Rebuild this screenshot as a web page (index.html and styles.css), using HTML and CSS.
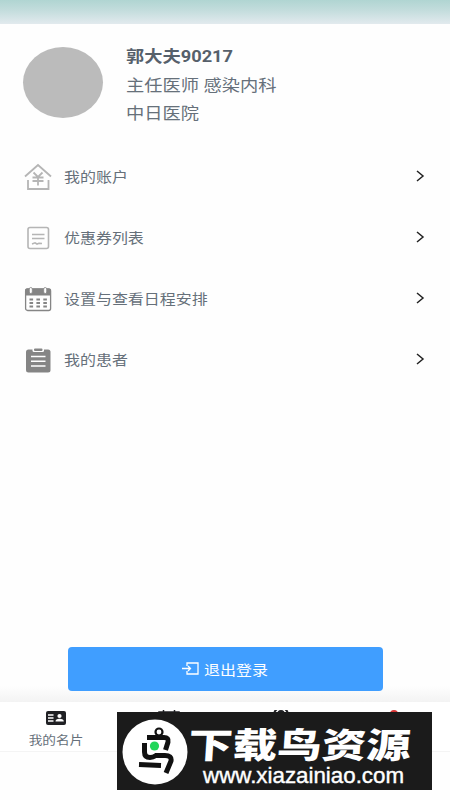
FILE: index.html
```html
<!DOCTYPE html>
<html lang="zh-CN">
<head>
    <meta charset="UTF-8">
    <meta name="viewport" content="width=device-width, initial-scale=1.0">
    <title>我的名片</title>
    <link rel="stylesheet" href="styles.css">
</head>
<body>
    <div class="page">
        <div class="topbar"></div>

        <div class="profile">
            <div class="avatar"></div>
            <div class="info">
                <div class="name"><span class="wide">郭大夫90217</span></div>
                <div><span class="wide">主任医师 感染内科</span></div>
                <div><span class="wide">中日医院</span></div>
            </div>
        </div>

        <div class="menu">
            <div class="item">
                <svg class="icon" viewBox="0 0 28 28" fill="none" stroke="#b5b5b5" stroke-width="1.8">
                    <path d="M1 13.500L14 2L27 13.500M4 17V26H24.500V17M9.500 9.500L14 14L18.500 9.500M8.500 14.500H19.500M8.500 18H19.500M14 14V22.500"/>
                </svg>
                <span class="wide">我的账户</span>
                <svg class="arrow" viewBox="0 0 10 12"><path d="M2 1L8 6L2 11"/></svg>
            </div>
            <div class="item">
                <svg class="icon" viewBox="0 0 28 28" fill="none" stroke="#b5b5b5" stroke-width="1.6">
                    <rect x="4" y="3.500" width="20.500" height="21" rx="2"/>
                    <path d="M8 10.500H20.500M8 14.500H20.500M8 20L11 18.800L13 20L15 19.200L18 19.500"/>
                </svg>
                <span class="wide">优惠券列表</span>
                <svg class="arrow" viewBox="0 0 10 12"><path d="M2 1L8 6L2 11"/></svg>
            </div>
            <div class="item">
                <svg class="icon" viewBox="0 0 28 28">
                    <rect x="1.600" y="4" width="25" height="21.500" rx="2" fill="#fff" stroke="#858585" stroke-width="1.300"/>
                    <path d="M1 10.500V5.500Q1 3.500 3 3.500H25Q27 3.500 27 5.500V10.500Z" fill="#858585"/>
                    <rect x="5.300" y="2.500" width="3" height="6" rx="1.500" fill="#fff" stroke="#858585" stroke-width=".8"/>
                    <rect x="19.700" y="2.500" width="3" height="6" rx="1.500" fill="#fff" stroke="#858585" stroke-width=".8"/>
                    <path d="M5.500 14.500H23M5.500 18H23M5.500 21.500H23" fill="none" stroke="#858585" stroke-width="1.900" stroke-dasharray="3.600 3.300"/>
                </svg>
                <span class="wide">设置与查看日程安排</span>
                <svg class="arrow" viewBox="0 0 10 12"><path d="M2 1L8 6L2 11"/></svg>
            </div>
            <div class="item">
                <svg class="icon" viewBox="0 0 28 28">
                    <rect x="2" y="3.500" width="24.500" height="23" rx="2.500" fill="#858585"/>
                    <rect x="8.500" y="2" width="11.500" height="4" rx="1.500" fill="#fff"/>
                    <rect x="10" y="2.500" width="8.500" height="2.500" rx="1" fill="#858585"/>
                    <path d="M7 10.500H21.500M7 15.200H21.500M7 20H21.500" stroke="#fff" stroke-width="1.500"/>
                </svg>
                <span class="wide">我的患者</span>
                <svg class="arrow" viewBox="0 0 10 12"><path d="M2 1L8 6L2 11"/></svg>
            </div>
        </div>

        <div class="logout-area">
            <button class="logout">
                <svg class="exit" viewBox="0 0 17 13" fill="none" stroke="#fff" stroke-width="1.300">
                    <path d="M5 4V1H16V12H5V9M0 6.500H8M6 4L8.500 6.500L6 9"/>
                </svg>
                <span class="wide">退出登录</span>
            </button>
        </div>

        <div class="tabs">
            <div class="tab">
                <svg class="card" viewBox="0 0 20 14">
                    <rect width="20" height="14" rx="2" fill="#202124"/>
                    <path d="M2 4H7.500M2 7H7.500M2 10H7.500" stroke="#fff" stroke-width="1.300"/>
                    <circle cx="13.500" cy="5" r="2.100" fill="#fff"/>
                    <path d="M9.500 10.500Q9.500 7.700 13.500 7.700Q17.800 7.700 17.800 10.500Z" fill="#fff"/>
                </svg>
                <span class="wide">我的名片</span>
            </div>
            <div class="tab">
                <svg class="peek" viewBox="0 0 22 14" fill="none" stroke="#202124" stroke-width="1.500">
                    <path d="M1 4V2H21V4M5.500 0V2M16.500 0V2"/>
                </svg>
            </div>
            <div class="tab">
                <svg class="peek" viewBox="0 0 22 14" fill="none" stroke="#202124" stroke-width="2">
                    <path d="M7 -1Q4 1 4 5M15 -1Q18 1 18 5M8 5Q8 1 11 1T14 5"/>
                </svg>
            </div>
            <div class="tab">
                <span class="dot"></span>
            </div>
        </div>

        <div class="banner">
            <svg class="logo" viewBox="0 0 66 66">
                <circle cx="33" cy="33" r="32.500" fill="#fff"/>
                <g fill="none" stroke="#111" stroke-width="5">
                    <circle cx="37" cy="13" r="3.500" stroke-width="2.200"/>
                    <path d="M25 18.500H42Q47 18.500 46 23L43.500 31"/>
                    <path d="M22.500 24V33Q22.500 38.500 28 38.500Q31 38.500 34 36.500H43Q50 36.500 49 42L44 54"/>
                    <path d="M17 45.500L39 46.500"/>
                </g>
                <circle cx="32.500" cy="27" r="4.600" fill="#22d65a"/>
            </svg>
            <div class="brand">
                <div class="brand-name">下载鸟资源</div>
                <div class="brand-url">www.xiazainiao.com</div>
            </div>
        </div>
    </div>
</body>
</html>
```
FILE: styles.css
```css
body {
    margin: 0;
    background-color: #fefefe;
    color: #66707a;
    font-family: Roboto, "Noto Sans CJK SC", sans-serif;
}
.page {
    position: relative;
    display: flex;
    flex-direction: column;
    width: 450px;
    height: 800px;
    overflow: hidden;
}
.topbar {
    height: 24px;
    background: linear-gradient(#b0d5d2, #c4dddd 45%, #e2eaee);
}
.profile {
    display: flex;
    gap: 23px;
    padding: 18px 23px 0;
    height: 104px;
    box-sizing: border-box;
}
.avatar {
    width: 80px;
    height: 71px;
    margin-top: 5px;
    border-radius: 50%;
    background-color: #bbb;
}
.info {
    padding-top: 1px;
    font-size: 16px;
    line-height: 28.7px;
}
.name {
    color: #56606b;
    font-weight: bold;
}
/* type is a little wider than tall everywhere */
.wide {
    display: inline-block;
    white-space: nowrap;
    transform: scaleX(1.14);
    transform-origin: left center;
}
.menu {
    margin-top: 18px;
}
.item {
    display: flex;
    align-items: center;
    height: 61px;
    padding: 0 25.5px 0 23.5px;
    font-size: 14px;
}
.item .wide {
    margin-bottom: 2px;
}
.icon {
    width: 28px;
    height: 28px;
    margin-right: 12.5px;
}
.arrow {
    width: 10px;
    height: 12px;
    margin: 0 0 1px auto;
    fill: none;
    stroke: #222;
    stroke-width: 1.5;
}
.logout-area {
    display: flex;
    flex: 1;
    align-items: flex-end;
    padding: 0 67px 11px 68px;
    background: linear-gradient(#fefefe calc(100% - 16px), #f3f3f3);
}
.logout {
    display: flex;
    align-items: center;
    justify-content: center;
    width: 315px;
    height: 44px;
    padding: 0 9px 1px 0;
    border: none;
    border-radius: 4px;
    background-color: #409eff;
    color: #fff;
    font-family: inherit;
    font-size: 14px;
}
.exit {
    width: 17px;
    height: 13px;
    margin: 0 5px 1px 0;
}
.tabs {
    display: grid;
    grid-template-columns: repeat(4, 1fr);
    height: 50px;
    margin-bottom: 48px;
    box-sizing: border-box;
    border-bottom: 1px solid #f4f4f4;
    background-color: #fff;
    font-size: 12px;
}
.tab {
    display: flex;
    flex-direction: column;
    align-items: center;
    padding-top: 8px;
}
.tab .wide {
    margin-top: 6px;
    transform-origin: center;
}
.card {
    width: 20px;
    height: 14px;
    margin-top: 1px;
}
.peek {
    width: 22px;
    height: 14px;
}
.dot {
    width: 8px;
    height: 8px;
    border-radius: 50%;
    background-color: #d73535;
}
.banner {
    position: absolute;
    left: 117px;
    top: 712px;
    display: flex;
    width: 315px;
    height: 78px;
    background-color: #1b1b1b;
    color: #fff;
}
.logo {
    width: 66px;
    height: 66px;
    margin: 7px 0 0 5px;
}
.brand {
    width: 230px;
    white-space: nowrap;
}
.brand-name {
    height: 50px;
    margin-left: 1px;
    font-family: "Noto Sans CJK SC", sans-serif;
    font-size: 35px;
    font-weight: 900;
    line-height: 62px;
    transform: scaleX(1.27) skewX(-3deg);
    transform-origin: left center;
}
.brand-url {
    margin-left: 15px;
    font-family: "Liberation Sans", sans-serif;
    font-size: 22px;
    line-height: 27px;
    transform: scaleX(1.015);
    transform-origin: left center;
    -webkit-text-stroke: 0.4px #fff;
}
```
